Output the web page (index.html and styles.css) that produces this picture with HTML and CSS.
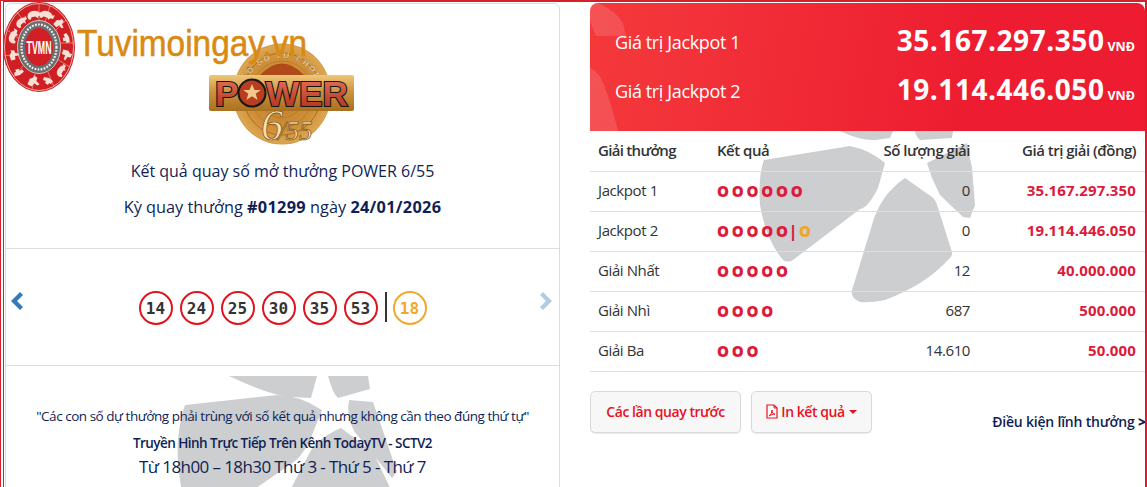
FILE: index.html
```html
<!DOCTYPE html>
<html lang="vi">
<head>
<meta charset="utf-8">
<title>Power 6/55</title>
<link rel="stylesheet" href="styles.css">
</head>
<body>
<a class="site-logo">
  <svg class="zodiac" viewBox="0 0 74 92" width="74" height="92">
    <defs>
      <path id="beast-a" d="M-6 2q1-5 6-5t7 3l2-1-1 4-3 0-1 2-2-2-4 0-1 2-2 0z"/>
      <path id="beast-b" d="M-5 3l2-5 3-1 1-2 3 2-1 3 3 3-2 1-3-2-2 3-2-1z"/>
      <path id="beast-c" d="M-4-3l5 1 4 3-2 3-2-1-1 2-3-2 1-2-3-1z"/>
    </defs>
    <ellipse cx="37" cy="46" rx="36" ry="45" fill="#cf1f24"/>
    <ellipse cx="37" cy="46" rx="34.500" ry="43.500" fill="none" stroke="#f3d0c0" stroke-width=".8"/>
    <g stroke="#efb7ab" stroke-width=".6">
      <path d="M37 3v17M15 11l9 12M4 28l12 9M2 55l14 -2M11 76l10-11M30 89l3-16M52 86l-6-15M68 66l-13-8M72 42l-13 0M64 19l-11 11M48 5l-5 16"/>
    </g>
    <g fill="#f8dfd4">
      <use href="#beast-a" transform="translate(31 13) rotate(-10)"/>
      <use href="#beast-a" transform="translate(44 13) rotate(15)"/>
      <use href="#beast-b" transform="translate(57 22) rotate(20)"/>
      <use href="#beast-c" transform="translate(65 37) rotate(45)"/>
      <use href="#beast-b" transform="translate(65 53) rotate(80)"/>
      <use href="#beast-a" transform="translate(58 70) rotate(-60) scale(.9)"/>
      <use href="#beast-c" transform="translate(46 79)"/>
      <use href="#beast-b" transform="translate(31 80) scale(1.100)"/>
      <use href="#beast-c" transform="translate(17 72) rotate(130)"/>
      <use href="#beast-b" transform="translate(11 54) rotate(-40)"/>
      <use href="#beast-a" transform="translate(10 36) rotate(-70)"/>
      <use href="#beast-a" transform="translate(18 21) rotate(-45) scale(.9)"/>
    </g>
    <ellipse cx="37" cy="46" rx="21.500" ry="26.500" fill="#6d6d6d" stroke="#e9e1dc" stroke-width=".8"/>
    <ellipse cx="37" cy="46" rx="17.500" ry="22.500" fill="none" stroke="#f1f1f1" stroke-width="2.200" stroke-dasharray="1.800 1.300"/>
    <ellipse cx="37" cy="46" rx="14" ry="19" fill="#d21f26"/>
    <text class="zodiac-text" x="37" y="52.500" text-anchor="middle" textLength="25" lengthAdjust="spacingAndGlyphs">TVMN</text>
  </svg>
  <span class="site-name">Tuvimoingay.vn</span>
</a>

<main class="page">
  <section class="card">
    <div class="card-head">
      <svg class="power-logo" viewBox="2 0 146 104" width="146" height="104">
        <defs>
          <radialGradient id="coin" cx=".5" cy=".5" r=".55">
            <stop offset="0" stop-color="#bf7f2c"/>
            <stop offset=".65" stop-color="#cf8f38"/>
            <stop offset=".88" stop-color="#dca550"/>
            <stop offset="1" stop-color="#a0641a"/>
          </radialGradient>
          <linearGradient id="bar" x1="0" y1="0" x2="0" y2="1">
            <stop offset="0" stop-color="#efc777"/>
            <stop offset=".5" stop-color="#c98f3c"/>
            <stop offset="1" stop-color="#a8701f"/>
          </linearGradient>
          <linearGradient id="letter" x1="0" y1="0" x2="0" y2="1">
            <stop offset="0" stop-color="#e9775d"/>
            <stop offset="1" stop-color="#a82c18"/>
          </linearGradient>
          <path id="coin-arc" d="M36 54A38 38 0 0 1 112 54"/>
        </defs>
        <ellipse cx="74" cy="52" rx="49" ry="50.500" fill="url(#coin)"/>
        <ellipse cx="74" cy="52" rx="39" ry="41" fill="none" stroke="#a96f22" stroke-width="1"/>
        <ellipse cx="74" cy="52" rx="31" ry="33" fill="none" stroke="#b57a27" stroke-width=".8"/>
        <ellipse cx="74" cy="52" rx="22" ry="24" fill="none" stroke="#b57a27" stroke-width=".8"/>
        <path d="M52 33Q74 10 96 33z" fill="#b04a1b"/>
        <text class="coin-top" text-anchor="middle"><textPath href="#coin-arc" startOffset="50%">XỔ SỐ TỰ CHỌN</textPath></text>
        <rect x="1" y="33" width="145" height="36" rx="2" fill="url(#bar)"/>
        <text class="power-word" x="7" y="64" textLength="133" lengthAdjust="spacingAndGlyphs" fill="url(#letter)">POWER</text>
        <circle cx="44" cy="51" r="13.500" fill="#b93d1e" stroke="#161616" stroke-width="2"/>
        <path d="M44 42l2.500 6h6.200l-5 3.800 1.900 6.200-5.600-3.700-5.600 3.700 1.900-6.200-5-3.800h6.200z" fill="#f1c98e"/>
        <text class="power-six" x="53" y="98">6<tspan class="power-six-rest" dx="-5">/55</tspan></text>
      </svg>
      <p class="draw-title">Kết quả quay số mở thưởng POWER 6/55</p>
      <p class="draw-date">Kỳ quay thưởng <b>#01299</b> ngày <b>24/01/2026</b></p>
    </div>

    <div class="balls-row">
      <svg class="chev" viewBox="0 0 14 20" width="14" height="20"><path d="M10 1l3 3-6 6 6 6-3 3-9-9z" fill="#337ab7"/></svg>
      <div class="balls">
        <span class="ball">14</span><span class="ball">24</span><span class="ball">25</span><span class="ball">30</span><span class="ball">35</span><span class="ball">53</span>
        <i class="ball-sep"></i>
        <span class="ball ball-extra">18</span>
      </div>
      <svg class="chev chev-off" viewBox="0 0 14 20" width="14" height="20"><path d="M4 1l-3 3 6 6-6 6 3 3 9-9z" fill="#337ab7"/></svg>
    </div>

    <div class="card-foot">
      <svg class="mark" viewBox="0 0 554 122" width="554" height="122" aria-hidden="true">
        <g fill="#cdcecf">
          <path d="M223 0h88l-6 22-20-1q-22-2-62-21zM322 0h40l2 13-32 9q-5-4-10-22z"/>
          <path d="M179 29l92-10q22 0 45 15l-12 30q-8 18-22 26l-52 36h-52q-8-38-6-62 2-22 7-35z"/>
          <path d="M343 24l24 2 24 70-5 6-38-47q-8-16-5-31z"/>
          <path d="M335 52l32 24 22 46H280l24-46q8-14 31-24z"/>
        </g>
      </svg>
      <div class="foot-text">
        <p class="note">"Các con số dự thưởng phải trùng với số kết quả nhưng không cần theo đúng thứ tự"</p>
        <p class="channel">Truyền Hình Trực Tiếp Trên Kênh TodayTV - SCTV2</p>
        <p class="time">Từ 18h00 – 18h30 Thứ 3 - Thứ 5 - Thứ 7</p>
      </div>
    </div>
  </section>

  <section class="results">
    <svg class="mark-right" viewBox="0 0 555 172" width="555" height="172" aria-hidden="true">
      <g fill="#cdcecf">
        <path d="M250 0h53l-3 7-15 2q-14 1-35-9zM325 0h38l-1 7-32 2q-4-3-5-9z"/>
        <path d="M174 29l86-14q20 4 35 17l-7 25q-10 20-18 21l-67 51q-5 3-10 0-17-20-23-55-2-30 4-45z"/>
        <path d="M337 32l40-20 5 25 3 37-5 13-7-1-23-22-8-17z"/>
        <path d="M315 47l27 19q4 3 6 11l14 44q1 4-4 8-23 25-63 40-15 3-25 2-10-4-8-12l20-65q8-30 33-47z"/>
      </g>
    </svg>
    <header class="jackpots">
      <svg class="jackpots-mark" viewBox="0 0 40 128" width="40" height="128" aria-hidden="true">
        <g fill="#fff" opacity=".13">
          <path d="M0 0h8q18 8 25 20l3 13H6q-6-14-6-18z"/>
          <path d="M0 65q10 4 15 20 7 18 13 43H0z"/>
        </g>
      </svg>
      <div class="jp-row"><span class="jp-label">Giá trị Jackpot 1</span><span class="jp-value">35.167.297.350<small>VNĐ</small></span></div>
      <div class="jp-row"><span class="jp-label">Giá trị Jackpot 2</span><span class="jp-value">19.114.446.050<small>VNĐ</small></span></div>
    </header>
    <table class="prizes">
      <thead>
        <tr><th class="c-name">Giải thưởng</th><th class="c-res">Kết quả</th><th class="c-qty">Số lượng giải</th><th class="c-val">Giá trị giải (đồng)</th></tr>
      </thead>
      <tbody>
        <tr><td>Jackpot 1</td><td class="dots">O O O O O O</td><td class="c-qty">0</td><td class="c-val money">35.167.297.350</td></tr>
        <tr><td>Jackpot 2</td><td class="dots">O O O O O<span class="dots-sep">|</span><span class="dot-extra">O</span></td><td class="c-qty">0</td><td class="c-val money">19.114.446.050</td></tr>
        <tr><td>Giải Nhất</td><td class="dots">O O O O O</td><td class="c-qty">12</td><td class="c-val money">40.000.000</td></tr>
        <tr><td>Giải Nhì</td><td class="dots">O O O O</td><td class="c-qty">687</td><td class="c-val money">500.000</td></tr>
        <tr><td>Giải Ba</td><td class="dots">O O O</td><td class="c-qty">14.610</td><td class="c-val money">50.000</td></tr>
      </tbody>
    </table>
    <div class="actions">
      <button class="btn btn-prev">Các lần quay trước</button>
      <button class="btn btn-print">
        <svg viewBox="0 0 12 15" width="12" height="15"><path d="M1 1h7l3 3v10H1z" fill="#fff" stroke="#e8111f" stroke-width="1.200"/><path d="M8 1v3h3M3 12c2-1 3-4 3-6 0 3 1 4 3 4-2 0-4 1-6 2z" fill="none" stroke="#e8111f"/></svg>
        In kết quả <i class="caret"></i>
      </button>
      <a class="terms">Điều kiện lĩnh thưởng <b>&gt;</b></a>
    </div>
  </section>
</main>
</body>
</html>
```

FILE: styles.css
```css
* { box-sizing: border-box; }
html, body { margin: 0; height: 487px; overflow: hidden; background: #fff; }
body {
  border-top: 2px solid #d3212b;
  border-left: 4px double #d3212b;
  border-right: 2px solid #e3192c;
  font-family: "Open Sans", "Noto Sans", sans-serif;
  color: #0f1f55;
  position: relative;
}
p { margin: 0; }

.site-logo { position: absolute; left: -2px; top: -1px; z-index: 3; display: flex; }
.zodiac-text { font: bold 18px "Liberation Sans", sans-serif; fill: #fff; }
.site-name {
  margin: 20px 0 0 1px;
  font: 37.500px/44px "Liberation Sans", sans-serif;
  -webkit-text-stroke: .6px #d98a12;
  color: #d98a12;
  transform: scaleX(.89);
  transform-origin: left;
}

.page { display: flex; gap: 30px; padding: 1px 0 0 1px; }

.card {
  width: 555px;
  height: 500px;
  border: 1px solid #dcdcdc;
  border-radius: 6px;
  flex: none;
}
.card-head { height: 245px; border-bottom: 1px solid #ddd; text-align: center; padding-top: 38px; }
.power-logo { display: block; margin: 0 auto; overflow: visible; }
.coin-top { font: bold 8px "Liberation Sans", sans-serif; fill: #fbe9c2; stroke: #7a4d12; stroke-width: .25; letter-spacing: 1.800px; }
.power-word { font: 900 35px "Liberation Sans", sans-serif; stroke: #141414; stroke-width: 2.200; paint-order: stroke; }
.power-six { font: italic 44px "Liberation Serif", serif; fill: #f7e3b5; stroke: #7a4d12; stroke-width: .7; }
.power-six-rest { font-size: 27px; }
.draw-title { font-size: 16px; line-height: 22px; margin-top: 14px; }
.draw-date { font-size: 16.300px; line-height: 22px; margin-top: 14px; }
.draw-date b { font-weight: 700; letter-spacing: .3px; }

.balls-row {
  height: 117px;
  border-bottom: 1px solid #ddd;
  display: flex;
  align-items: center;
  justify-content: space-between;
  padding: 0 6px 0 4px;
}
.chev { margin-top: -12px; }
.chev-off { opacity: .38; }
.balls { display: flex; align-items: center; gap: 7px; margin: 2px 0 0 2px; }
.ball {
  width: 34px;
  height: 34px;
  border: 2px solid #e0141f;
  border-radius: 50%;
  display: flex;
  align-items: center;
  justify-content: center;
  font: bold 16px "DejaVu Sans Mono", monospace;
  color: #333;
}
.ball-sep { width: 2px; height: 30px; background: #333; margin: -2px -1px 0 0; }
.ball-extra { border-color: #f0a82e; color: #f0a82e; }

.card-foot { position: relative; height: 122px; text-align: center; padding-top: 40px; }
.mark { position: absolute; left: 0; top: 10px; }
.foot-text { position: relative; }
.note { font-size: 13.500px; line-height: 20px; letter-spacing: -.47px; }
.channel { font-size: 13.500px; line-height: 20px; margin-top: 7px; font-weight: 600; letter-spacing: -.55px; }
.time { font-size: 17px; line-height: 24px; margin-top: 2px; letter-spacing: -.6px; }

.results { width: 555px; flex: none; position: relative; }
.mark-right { position: absolute; left: 0; top: 128px; }
.jackpots {
  position: relative;
  height: 128px;
  border-radius: 8px 8px 0 0;
  background: linear-gradient(100deg, #f43a3c, #ed1c30 70%);
  color: #fff;
  padding: 13px 10px 0 25px;
  overflow: hidden;
}
.jackpots-mark { position: absolute; left: 0; top: 0; }
.jp-row { display: flex; justify-content: space-between; align-items: center; height: 49px; position: relative; }
.jp-label { font-size: 18px; letter-spacing: -.37px; padding-top: 2px; }
.jp-value { font-size: 28px; font-weight: 700; letter-spacing: .55px; padding-bottom: 2px; }
.jp-value small { font-size: 12.500px; margin-left: 3px; letter-spacing: 0; }

.prizes { position: relative; width: 555px; border-collapse: collapse; table-layout: fixed; color: #333; font-size: 15px; }
.prizes th, .prizes td { height: 40px; border-bottom: 1px solid #ddd; padding: 0 8px 2px; text-align: left; letter-spacing: -.4px; }
.prizes th { font-weight: 600; font-size: 15px; letter-spacing: -.5px; }
.prizes .c-name { width: 127px; letter-spacing: -.7px; }
.prizes .c-res { width: 142px; padding: 0 0 2px; }
.prizes .c-qty { width: 111px; text-align: right; padding: 0 0 2px; }
.prizes .c-val { text-align: right; padding-right: 9px; }
.prizes .dots { padding: 0; color: #dc1a3a; font-weight: 800; font-size: 15px; letter-spacing: .2px; word-spacing: -1.500px; }
.dots-sep { margin: 0 2px 0 1px; }
.dot-extra { color: #eea62a; }
.prizes .money { color: #dc1a3a; font-weight: 700; letter-spacing: .15px; }

.actions { position: relative; display: flex; align-items: flex-start; padding-top: 19px; }
.btn {
  height: 42px;
  background: #f7f7f7;
  border: 1px solid #d9d9d9;
  border-radius: 5px;
  box-shadow: 0 1px 1px rgba(0,0,0,.08);
  font: 600 14px "Open Sans", sans-serif;
  letter-spacing: -.45px;
  color: #e8111f;
  padding: 0;
}
.btn-prev { width: 151px; margin-right: 10px; }
.btn-print { width: 121px; display: flex; align-items: center; justify-content: center; gap: 3px; }
.caret { width: 0; height: 0; border: 4px solid transparent; border-top-color: #e8111f; border-bottom: 0; margin-left: 1px; }
.terms { margin-left: auto; margin-top: 21px; font-size: 14px; font-weight: 600; color: #0f1f55; letter-spacing: -.2px; white-space: nowrap; margin-right: -1px; }
.terms b { font-weight: 800; }
```
